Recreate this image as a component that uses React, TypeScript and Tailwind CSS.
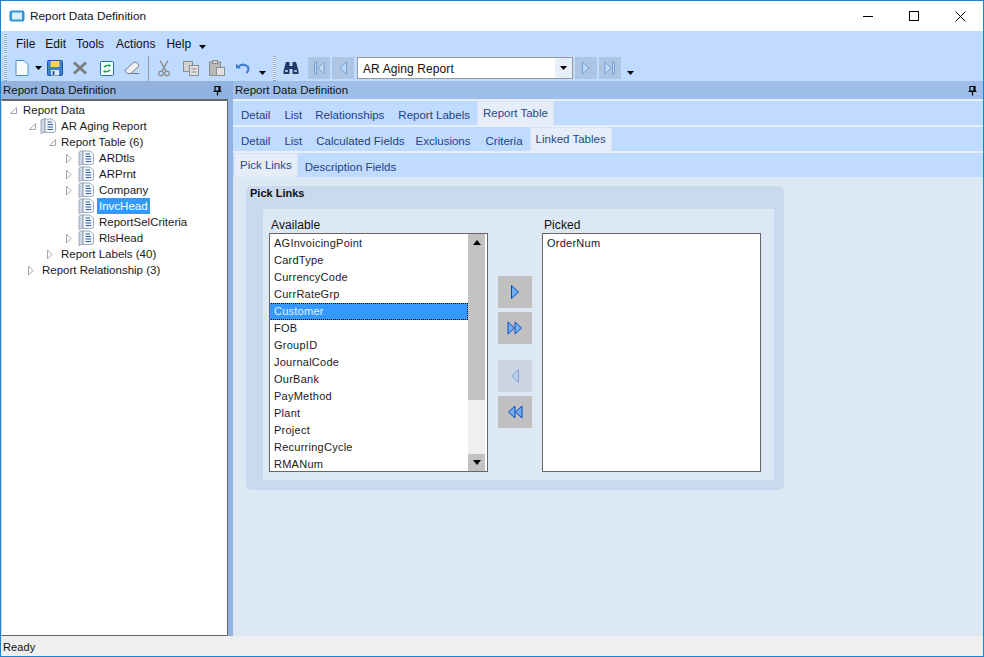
import React from "react";

const Arrow = ({ open }: { open?: boolean }) =>
  open ? (
    <svg width="9" height="9" viewBox="0 0 9 9" className="shrink-0">
      <path d="M7.5 1.5 V7.5 H1.5 Z" fill="#fff" stroke="#a6a6a6" />
    </svg>
  ) : (
    <svg width="9" height="11" viewBox="0 0 9 11" className="shrink-0">
      <path d="M2.5 1 L7 5.5 L2.5 10 Z" fill="#fff" stroke="#a6a6a6" />
    </svg>
  );

const BookIcon = () => (
  <svg width="17" height="16" viewBox="0 0 17 16" className="shrink-0">
    <path d="M1 2 L5 0.5 V14 L1 15.5 Z" fill="#cfd8e4" stroke="#8b98a8" strokeWidth="0.8" />
    <path d="M5 1 H12 L15.5 4 V13 Q15 14.5 13 14.5 H5 Z" fill="#f2f5f9" stroke="#8b98a8" strokeWidth="0.8" />
    <path d="M7.5 4 H12 M7.5 6.5 H13 M7.5 9 H13 M7.5 11.5 H13" stroke="#2f5f9e" strokeWidth="1" />
  </svg>
);

const Caret = () => (
  <svg width="7" height="4" viewBox="0 0 7 4" className="shrink-0">
    <path d="M0 0 H7 L3.5 4 Z" fill="#000" />
  </svg>
);

const Pin = () => (
  <svg width="9" height="11" viewBox="0 0 9 11">
    <path d="M2 1.5 H7 V6 H2 Z M6 1.5 V6 M0.5 6.5 H8.5 M4.5 6.5 V10.5" fill="none" stroke="#000" strokeWidth="1.2" />
  </svg>
);

const Grip = ({ h }: { h: string }) => (
  <div className={`w-[3px] shrink-0 ${h} bg-[repeating-linear-gradient(to_bottom,#8fa8c8_0px,#8fa8c8_1px,#eef4fc_1px,#eef4fc_2px)]`} />
);

const NavBtn = ({ d, faded, w }: { d: string; faded?: boolean; w: string }) => (
  <div className={`h-[22px] ${w} bg-[#adc5e3] flex items-center justify-center shrink-0`}>
    <svg width="14" height="16" viewBox="0 0 14 16">
      <path d={d} fill={faded ? "#c4dbf5" : "#bcd8f8"} stroke="#6fa0dc" strokeWidth="1" />
    </svg>
  </div>
);

const tree = [
  { pl: "pl-[7px]", arrow: "open", gap: "ml-[3px]", text: "Report Data" },
  { pl: "pl-[26px]", arrow: "open", book: "ml-[3px]", text: "AR Aging Report" },
  { pl: "pl-[46px]", arrow: "open", gap: "ml-[2px]", text: "Report Table (6)" },
  { pl: "pl-[62px]", arrow: "closed", book: "ml-[5px]", text: "ARDtls" },
  { pl: "pl-[62px]", arrow: "closed", book: "ml-[5px]", text: "ARPrnt" },
  { pl: "pl-[62px]", arrow: "closed", book: "ml-[5px]", text: "Company" },
  { pl: "pl-[62px]", arrow: "none", book: "ml-[5px]", text: "InvcHead", sel: true },
  { pl: "pl-[62px]", arrow: "none", book: "ml-[5px]", text: "ReportSelCriteria" },
  { pl: "pl-[62px]", arrow: "closed", book: "ml-[5px]", text: "RlsHead" },
  { pl: "pl-[43px]", arrow: "closed", gap: "ml-[5px]", text: "Report Labels (40)" },
  { pl: "pl-[24px]", arrow: "closed", gap: "ml-[5px]", text: "Report Relationship (3)" },
];

const available = [
  "AGInvoicingPoint", "CardType", "CurrencyCode", "CurrRateGrp", "Customer", "FOB", "GroupID",
  "JournalCode", "OurBank", "PayMethod", "Plant", "Project", "RecurringCycle", "RMANum",
];

const Tab = ({ label, active, cls }: { label: string; active?: boolean; cls: string }) =>
  active ? (
    <div className={`h-[24px] px-[5px] pt-[1px] flex items-center bg-[#e5edf9] border-t border-x border-[#d7e4f6] rounded-t-[2px] text-[#274a86] ${cls}`}>
      {label}
    </div>
  ) : (
    <div className={`h-[24px] pt-[5px] flex items-center text-[#1f3f86] ${cls}`}>{label}</div>
  );

const ArrowBtn = ({ kind, disabled, cls }: { kind: string; disabled?: boolean; cls?: string }) => {
  const fill = disabled ? "#b4cdec" : "#6fb0f5";
  const stroke = disabled ? "#86a3cf" : "#0f46c0";
  return (
    <div className={`w-[34px] h-[32px] flex items-center justify-center ${disabled ? "bg-[#cdd5e2]" : "bg-[#c0c0c0]"} ${cls ?? ""}`}>
      <svg width="20" height="16" viewBox="0 0 20 16">
        {kind === "r" && <path d="M6.5 1.5 L13.5 8 L6.5 14.5 Z" fill={fill} stroke={stroke} />}
        {kind === "l" && <path d="M13.5 1.5 L6.5 8 L13.5 14.5 Z" fill={fill} stroke={stroke} />}
        {kind === "rr" && (
          <>
            <path d="M3 2 L9.5 8 L3 14 Z" fill={fill} stroke={stroke} />
            <path d="M10 2 L16.5 8 L10 14 Z" fill={fill} stroke={stroke} />
          </>
        )}
        {kind === "ll" && (
          <>
            <path d="M17 2 L10.5 8 L17 14 Z" fill={fill} stroke={stroke} />
            <path d="M10 2 L3.5 8 L10 14 Z" fill={fill} stroke={stroke} />
          </>
        )}
      </svg>
    </div>
  );
};

export default function App() {
  return (
    <div className="w-[984px] h-[657px] overflow-hidden flex flex-col bg-white border-t border-x border-b border-[#1883d7] text-[12px] leading-none text-[#1a1a1a] font-['Liberation_Sans',Arial,sans-serif]">
      {/* Title bar */}
      <div className="h-[30px] shrink-0 flex items-center bg-white">
        <svg width="16" height="12" viewBox="0 0 16 12" className="ml-[8px]">
          <rect x="0.5" y="0.5" width="15" height="11" rx="2" fill="#2f95d6" />
          <rect x="3" y="2.5" width="10" height="7" fill="#d9f0fb" />
        </svg>
        <span className="ml-[5px] pt-[1px] text-[11.8px] text-[#111]">Report Data Definition</span>
        <div className="flex-1" />
        <div className="w-[46px] h-full flex items-center justify-center">
          <div className="w-[10px] h-px bg-black" />
        </div>
        <div className="w-[46px] h-full flex items-center justify-center">
          <div className="w-[10px] h-[10px] border border-black" />
        </div>
        <div className="w-[46px] h-full flex items-center justify-center">
          <svg width="11" height="11" viewBox="0 0 11 11">
            <path d="M0.5 0.5 L10.5 10.5 M10.5 0.5 L0.5 10.5" stroke="#000" strokeWidth="1" />
          </svg>
        </div>
      </div>

      {/* Menu + toolbar */}
      <div className="h-[50px] shrink-0 bg-[#bfdbff] flex flex-col">
        <div className="h-[24px] flex items-center pl-[3px] pt-[1px]">
          <Grip h="h-[20px]" />
          <div className="ml-[9px] flex items-center text-[12px] text-[#111]">
            <span>File</span>
            <span className="ml-[10px]">Edit</span>
            <span className="ml-[10px]">Tools</span>
            <span className="ml-[12px]">Actions</span>
            <span className="ml-[11px]">Help</span>
            <span className="ml-[8px] mt-[7px]"><Caret /></span>
          </div>
        </div>
        <div className="h-[26px] flex items-center pl-[3px]">
          <Grip h="h-[25px]" />
          <svg width="14" height="16" viewBox="0 0 14 16" className="ml-[8px]">
            <path d="M1 0.5 H9 L13 4.5 V15.5 H1 Z" fill="#f5faff" stroke="#4d90d0" />
          </svg>
          <span className="ml-[6px]"><Caret /></span>
          <svg width="16" height="16" viewBox="0 0 16 16" className="ml-[5px]">
            <rect x="0.5" y="0.5" width="15" height="15" rx="1" fill="#3f7fd0" stroke="#1f55a5" />
            <rect x="3.5" y="1" width="9" height="6" fill="#ffd24d" />
            <rect x="4" y="10" width="8" height="5.5" fill="#dfe8f4" />
            <rect x="5.5" y="11" width="2" height="4" fill="#2f5f9e" />
          </svg>
          <svg width="16" height="16" viewBox="0 0 16 16" className="ml-[9px]">
            <path d="M2 2.5 L14 13.5 M14 2.5 L2 13.5" stroke="#7d7f85" strokeWidth="3" />
          </svg>
          <svg width="14" height="15" viewBox="0 0 14 15" className="ml-[12px]">
            <rect x="0.5" y="0.5" width="13" height="14" rx="1" fill="#f3fbf8" stroke="#1f6fb5" />
            <path d="M3.5 6 Q5 3 9 4 L8 2.5 L11 4.5 L8.5 6.5 L9 5 Q6 4.5 5 6.5 Z M10.5 9 Q9 12 5 11 L6 12.5 L3 10.5 L5.5 8.5 L5 10 Q8 10.5 9 8.5 Z" fill="#18a04a" />
          </svg>
          <svg width="16" height="14" viewBox="0 0 16 14" className="ml-[10px]">
            <path d="M1 9.5 L9.5 1.5 Q11 0.5 12.5 1.5 L14.5 3.5 Q15 5 14 6 L7 12.5 H3.5 Z" fill="#eef0f4" stroke="#6f7680" />
            <path d="M7.5 12.5 H15" stroke="#6f7680" />
          </svg>
          <div className="ml-[8px] w-px h-[25px] bg-[#9a9a9a]" />
          <svg width="12" height="17" viewBox="0 0 12 17" className="ml-[9px]">
            <path d="M2 0.5 L8 11 M10 0.5 L4 11" stroke="#8e8e8e" strokeWidth="1.5" />
            <circle cx="3" cy="13.5" r="2.3" fill="none" stroke="#8e8e8e" strokeWidth="1.3" />
            <circle cx="9" cy="13.5" r="2.3" fill="none" stroke="#8e8e8e" strokeWidth="1.3" />
          </svg>
          <svg width="16" height="15" viewBox="0 0 16 15" className="ml-[13px]">
            <rect x="0.5" y="0.5" width="9" height="10" fill="#d2d2d2" stroke="#8e8e8e" />
            <rect x="6.5" y="4.5" width="9" height="10" fill="#e0e0e0" stroke="#8e8e8e" />
            <path d="M8.5 8 H13.5 M8.5 11 H13.5" stroke="#8e8e8e" />
          </svg>
          <svg width="16" height="16" viewBox="0 0 16 16" className="ml-[10px]">
            <rect x="0.5" y="2" width="11" height="13.5" fill="#b8b8b8" stroke="#8e8e8e" />
            <rect x="3.5" y="0.5" width="5" height="3" fill="#cfcfcf" stroke="#8e8e8e" />
            <rect x="7.5" y="7.5" width="8" height="8" fill="#e0e0e0" stroke="#8e8e8e" />
          </svg>
          <svg width="15" height="12" viewBox="0 0 15 12" className="ml-[10px]">
            <path d="M1 1.5 V6.5 H6 Z" fill="#3f7fd0" />
            <path d="M3 5 Q8 0 13 5 Q14.5 8 11.5 11" fill="none" stroke="#3f7fd0" strokeWidth="2.2" />
          </svg>
          <span className="ml-[9px] mt-[9px]"><Caret /></span>
          <span className="ml-[7px]"><Grip h="h-[25px]" /></span>
          <svg width="16" height="14" viewBox="0 0 16 14" className="ml-[7px]">
            <path d="M3 1 H6.5 V5 H9.5 V1 H13 L15.5 10 V13 H9.5 V8 H6.5 V13 H0.5 V10 Z" fill="#20386b" />
            <path d="M2 10 H5 M11 10 H14" stroke="#cfe0f5" strokeWidth="1.5" />
          </svg>
          <div className="ml-[9px]">
            <NavBtn w="w-[22px]" faded d="M2.5 2 V14 H4.5 V2 Z M12 2 L6 8 L12 14 Z" />
          </div>
          <div className="ml-[2px]">
            <NavBtn w="w-[22px]" d="M10.5 2 L4 8 L10.5 14 Z" />
          </div>
          <div className="ml-[3px] w-[216px] h-[22px] shrink-0 bg-white border border-[#999] flex items-center">
            <span className="flex-1 pl-[5px] pt-[1px] text-[12px] tracking-[0.1px] text-[#111]">AR Aging Report</span>
            <div className="w-[17px] h-full bg-[#e6eefa] flex items-center justify-center"><Caret /></div>
          </div>
          <div className="ml-[2px]">
            <NavBtn w="w-[22px]" d="M3.5 2 L10 8 L3.5 14 Z" />
          </div>
          <div className="ml-[2px]">
            <NavBtn w="w-[22px]" faded d="M2 2 L8 8 L2 14 Z M9.5 2 V14 H11.5 V2 Z" />
          </div>
          <span className="ml-[6px] mt-[9px]"><Caret /></span>
        </div>
      </div>

      {/* Main */}
      <div className="flex-1 min-h-0 flex">
        {/* Left panel */}
        <div className="w-[227px] shrink-0 flex flex-col">
          <div className="h-[18px] shrink-0 bg-[#92b3e0] flex items-center justify-between pl-[2px] pr-[6px] text-[11.5px] text-[#111]">
            <span className="pt-[1px]">Report Data Definition</span>
            <Pin />
          </div>
          <div className="flex-1 bg-white border-t-2 border-x border-b border-[#666] border-l-[#d8d8d8] pt-[1px] text-[11.5px]">
            {tree.map((r) => (
              <div key={r.text} className={`h-[16px] flex items-center ${r.pl}`}>
                {r.arrow === "open" && <Arrow open />}
                {r.arrow === "closed" && <Arrow />}
                {r.arrow === "none" && <span className="w-[9px] shrink-0" />}
                {r.book && <span className={r.book}><BookIcon /></span>}
                <span
                  className={`h-[16px] pt-[1px] flex items-center px-[2px] ${r.book ? "ml-[2px]" : r.gap ?? ""} ${
                    r.sel ? "bg-[#3399ff] text-white" : "text-[#1a1a1a]"
                  }`}
                >
                  {r.text}
                </span>
              </div>
            ))}
          </div>
        </div>
        {/* Splitter */}
        <div className="w-[5px] shrink-0 bg-[#8fb3e3]" />
        {/* Right panel */}
        <div className="flex-1 min-w-0 flex flex-col bg-[#dde8f5]">
          <div className="h-[18px] shrink-0 bg-[#9dbfe9] flex items-center justify-between pl-[2px] pr-[6px] text-[11.5px] text-[#111]">
            <span className="pt-[1px]">Report Data Definition</span>
            <Pin />
          </div>
          <div className="h-[2px] shrink-0 bg-[#e6eef8]" />
          <div className="h-[24px] shrink-0 bg-[#bfdbff] flex text-[11.5px] pl-[8px]">
            <Tab label="Detail" cls="" />
            <Tab label="List" cls="ml-[14px]" />
            <Tab label="Relationships" cls="ml-[13px]" />
            <Tab label="Report Labels" cls="ml-[14px]" />
            <Tab label="Report Table" active cls="ml-[7px]" />
          </div>
          <div className="h-[2px] shrink-0 bg-[#e6eef8]" />
          <div className="h-[24px] shrink-0 bg-[#bfdbff] flex text-[11.5px] pl-[8px]">
            <Tab label="Detail" cls="" />
            <Tab label="List" cls="ml-[14px]" />
            <Tab label="Calculated Fields" cls="ml-[14px]" />
            <Tab label="Exclusions" cls="ml-[11px]" />
            <Tab label="Criteria" cls="ml-[15px]" />
            <Tab label="Linked Tables" active cls="ml-[7px]" />
          </div>
          <div className="h-[2px] shrink-0 bg-[#e6eef8]" />
          <div className="h-[24px] shrink-0 bg-[#bfdbff] flex text-[11.5px] pl-[1px]">
            <Tab label="Pick Links" active cls="" />
            <Tab label="Description Fields" cls="ml-[7px]" />
          </div>

          {/* Group box */}
          <div className="mt-[9px] ml-[13px] w-[538px] h-[304px] rounded-[5px] bg-[#c9d9ee] flex flex-col pl-[17px] pr-[10px] pb-[10px]">
            <div className="h-[23px] -ml-[13px] pt-[2px] flex items-start font-bold text-[11px] text-[#111]">Pick Links</div>
            <div className="flex-1 bg-[#dde8f5] pl-[6px] pt-[9px] flex">
              <div className="w-[219px] shrink-0">
                <div className="h-[15px] pb-[2px] flex items-center pl-[2px] text-[12px] tracking-[0.1px] text-[#111]">Available</div>
                <div className="h-[239px] bg-white border border-[#666] flex overflow-hidden">
                  <div className="flex-1 pt-[1px] min-w-0">
                    {available.map((a) =>
                      a === "Customer" ? (
                        <div key={a} className="h-[17px] flex items-center pl-[4px] bg-[#3399ff] text-[#e6f2ff] border border-dotted border-black -ml-[1px] tracking-[0.25px] text-[11px]">
                          {a}
                        </div>
                      ) : (
                        <div key={a} className="h-[17px] flex items-center pl-[4px] tracking-[0.25px] text-[11px] text-[#1a1a1a]">{a}</div>
                      )
                    )}
                  </div>
                  <div className="w-[17px] shrink-0 mr-[2px] flex flex-col bg-[#efefef]">
                    <div className="h-[166px] bg-[#c2c2c2] flex justify-center pt-[6px]">
                      <svg width="8" height="5" viewBox="0 0 8 5"><path d="M4 0 L8 5 H0 Z" fill="#000" /></svg>
                    </div>
                    <div className="flex-1" />
                    <div className="h-[17px] bg-[#c2c2c2] flex justify-center items-center">
                      <svg width="8" height="5" viewBox="0 0 8 5"><path d="M0 0 H8 L4 5 Z" fill="#000" /></svg>
                    </div>
                  </div>
                </div>
              </div>
              <div className="w-[54px] shrink-0 pl-[10px] pt-[58px] flex flex-col">
                <ArrowBtn kind="r" />
                <ArrowBtn kind="rr" cls="mt-[4px]" />
                <ArrowBtn kind="l" disabled cls="mt-[16px]" />
                <ArrowBtn kind="ll" cls="mt-[4px]" />
              </div>
              <div className="w-[219px] shrink-0">
                <div className="h-[15px] pb-[2px] flex items-center pl-[2px] text-[12px] tracking-[0.1px] text-[#111]">Picked</div>
                <div className="h-[239px] bg-white border border-[#666] pt-[1px]">
                  <div className="h-[17px] flex items-center pl-[4px] tracking-[0.25px] text-[11px] text-[#1a1a1a]">OrderNum</div>
                </div>
              </div>
            </div>
          </div>
        </div>
      </div>

      {/* Status bar */}
      <div className="h-[20px] shrink-0 bg-[#efefef] flex items-center pl-[2px] pt-[2px] text-[11px] tracking-[0.1px] text-[#111]">Ready</div>
    </div>
  );
}
